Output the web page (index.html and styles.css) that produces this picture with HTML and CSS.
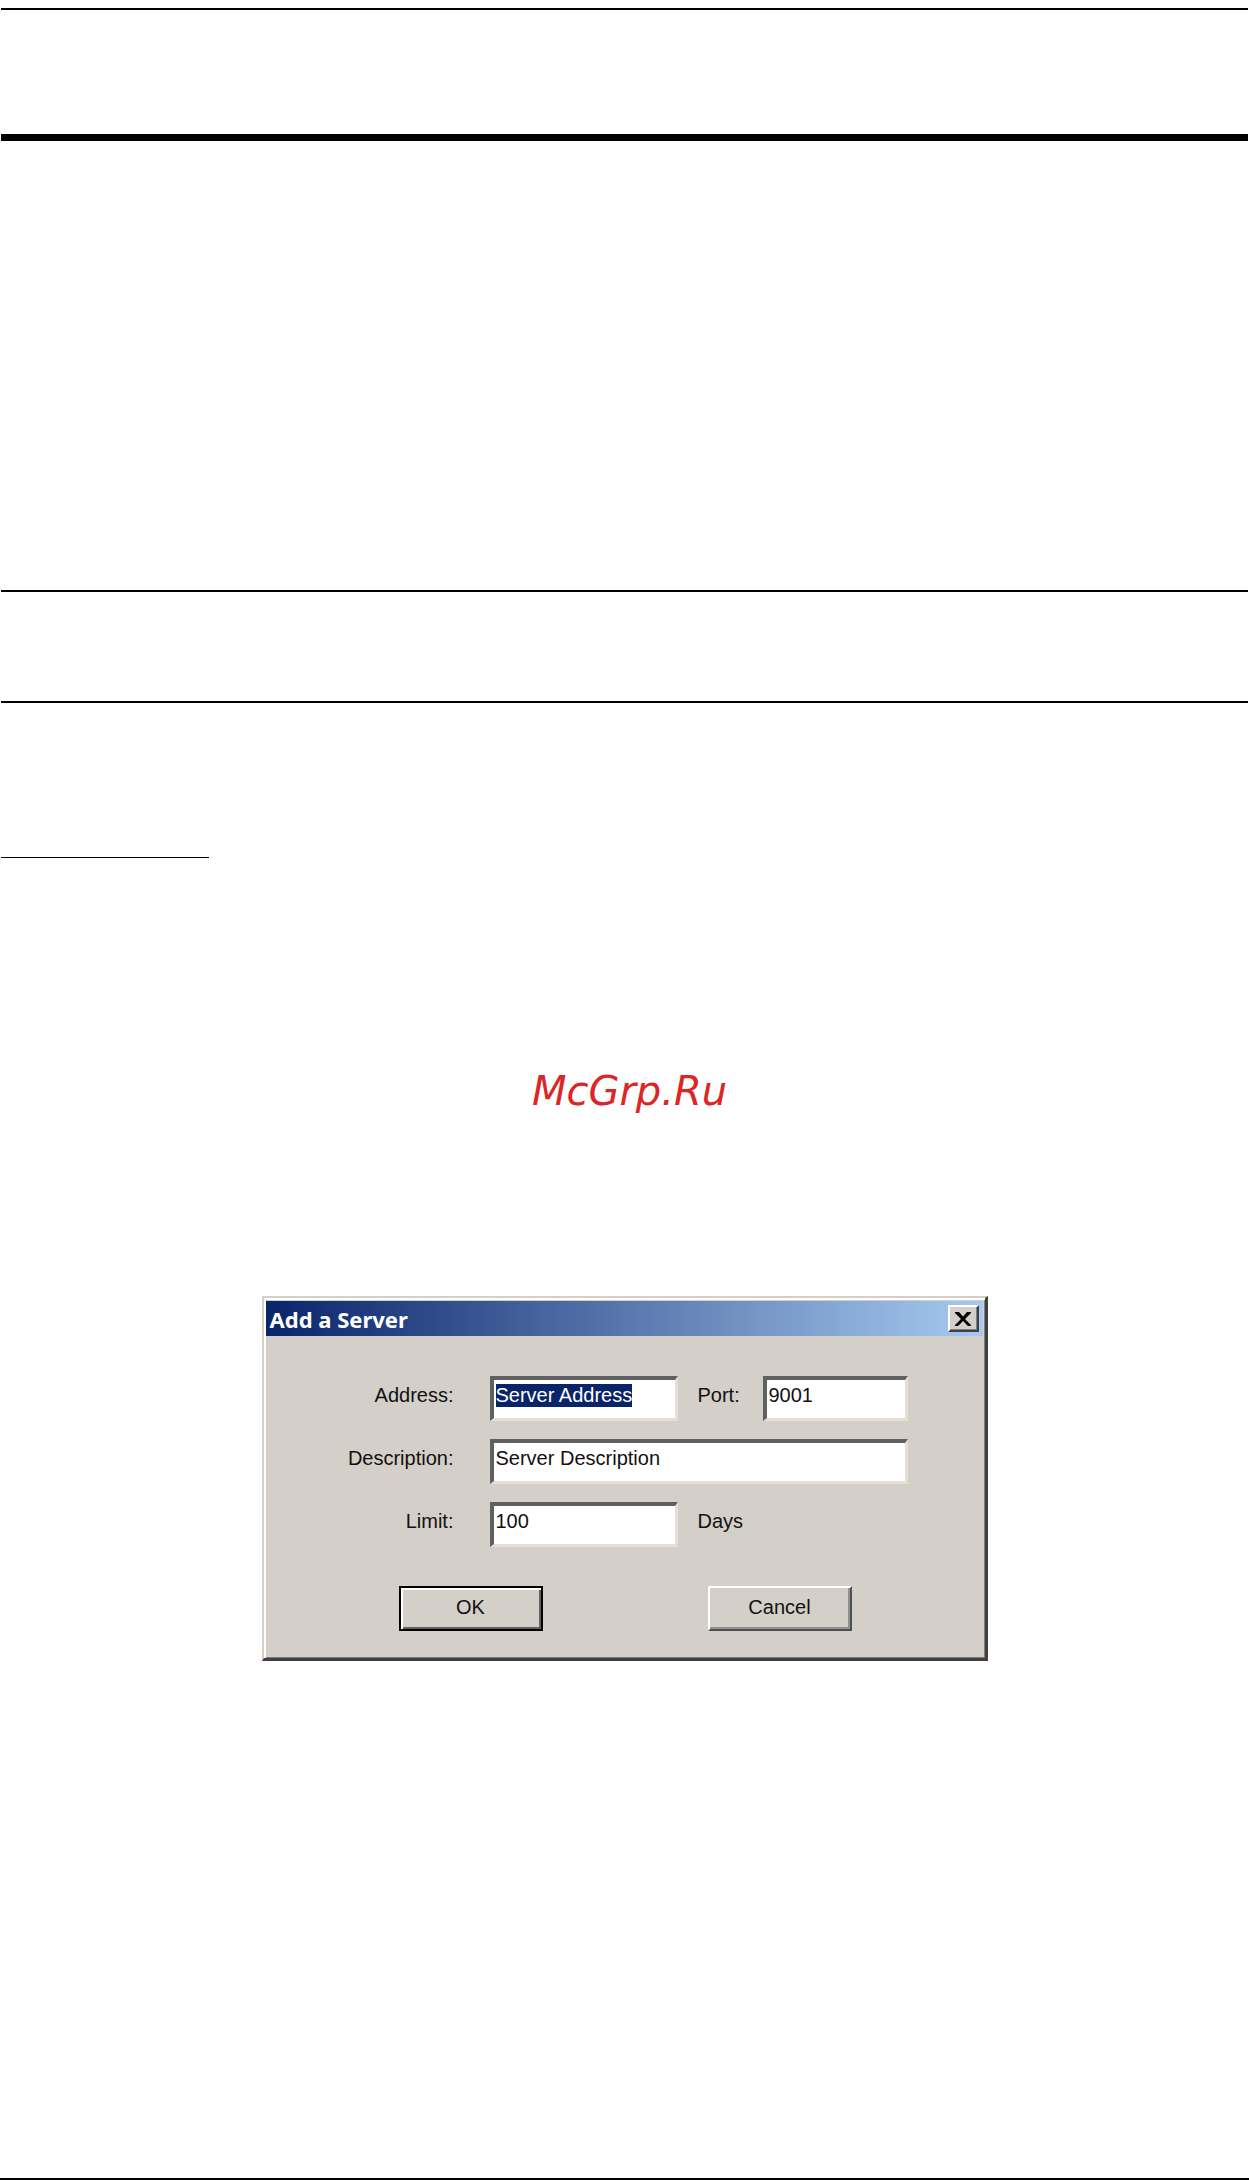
FILE: index.html
```html
<!DOCTYPE html>
<html lang="en">
<head>
<meta charset="utf-8">
<title>Add a Server</title>
<link rel="stylesheet" href="styles.css">
</head>
<body>
<main class="page">
  <hr class="rule rule-top">
  <hr class="rule rule-thick">
  <hr class="rule rule-section">
  <hr class="rule rule-subsection">
  <hr class="rule rule-note">
  <p class="brand">McGrp.Ru</p>
  <section class="dialog" role="dialog" aria-labelledby="dialog-title">
    <header class="titlebar">
      <h1 class="title" id="dialog-title">Add a Server</h1>
      <button class="close" type="button" aria-label="Close">
        <svg class="close-icon" viewBox="0 0 16 14" aria-hidden="true"><path d="M0 0h4l4 4.500 4-4.500h4v1l-6 6 6 6v1h-3l-5-5-5 5H0v-1l6-6-6-6z"/></svg>
      </button>
    </header>
    <form class="form">
      <div class="fields">
        <label class="label" for="address">Address:</label>
        <input class="input" id="address" type="text" value="Server Address">
        <label for="port">Port:</label>
        <input class="input" id="port" type="text" value="9001">
        <label class="label" for="description">Description:</label>
        <input class="input input-wide" id="description" type="text" value="Server Description">
        <label class="label" for="limit">Limit:</label>
        <input class="input" id="limit" type="text" value="100">
        <span class="unit">Days</span>
      </div>
      <div class="actions">
        <button class="button button-default" type="button">OK</button>
        <button class="button" type="button">Cancel</button>
      </div>
    </form>
  </section>
  <hr class="rule rule-bottom">
</main>
<script src="script.js"></script>
</body>
</html>
```
FILE: styles.css
```css
* {
  box-sizing: border-box;
}

body {
  margin: 0;
  background: #fff;
  color: #111;
  font-family: "Liberation Sans", sans-serif;
  font-size: 20px;
  line-height: 28px;
}

.page {
  display: flex;
  flex-direction: column;
  min-height: 100vh;
}

.rule {
  width: auto;
  height: 2px;
  margin: 0 1px;
  border: 0;
  background: #000;
  flex: none;
}

.rule-top {
  margin-top: 8px;
}

.rule-thick {
  height: 7px;
  margin-top: 124px;
}

.rule-section {
  margin-top: 449px;
}

.rule-subsection {
  margin-top: 109px;
}

.rule-note {
  width: 208px;
  height: 1px;
  margin-top: 154px;
}

.rule-bottom {
  margin: auto 0 0;
}

.brand {
  margin: 209px 0 0;
  padding-left: 10px;
  color: #dc2626;
  font-family: "DejaVu Sans", sans-serif;
  font-size: 40px;
  font-style: italic;
  line-height: 48px;
  text-align: center;
}

.dialog {
  width: 100%;
  max-width: 726px;
  margin: 181px auto 48px;
  padding: 3px 2px 1px 2px;
  border: 2px solid;
  border-color: #d4d0c8 #404040 #404040 #d4d0c8;
  border-right-width: 3px;
  border-bottom-width: 3px;
  background: #d4cfc8;
  box-shadow: inset 2px 2px #fff, inset -1px -1px #808080;
}

.titlebar {
  display: flex;
  align-items: center;
  justify-content: space-between;
  height: 35px;
  padding: 0 4px;
  background: linear-gradient(to right, #0a246a, #a6caf0);
}

.title {
  margin: 0;
  color: #fff;
  font-family: "Noto Sans", "Open Sans", sans-serif;
  font-size: 22px;
  font-weight: bold;
  line-height: 28px;
}

.close {
  display: flex;
  align-items: center;
  justify-content: center;
  width: 31px;
  height: 27px;
  padding: 0;
  border: 2px solid;
  border-color: #fff #404040 #404040 #fff;
  background: #d4cfc8;
  box-shadow: inset -1px -1px #808080;
}

.close-icon {
  width: 16px;
  height: 14px;
}

.form {
  padding: 40px 0 26px;
}

.fields {
  display: grid;
  grid-template-columns: 204px 188px 45px 145px;
  column-gap: 20px;
  row-gap: 18px;
}

.fields label,
.unit {
  padding-top: 5px;
}

.fields .label {
  padding-right: 16px;
  text-align: right;
}

.input {
  width: 100%;
  height: 45px;
  padding: 0 2px 7px;
  border: 3px solid;
  border-color: #606060 #e4e0d8 #e4e0d8 #606060;
  border-left-width: 4px;
  border-top-width: 4px;
  border-radius: 0;
  outline: 0;
  background: #fff;
  color: #111;
  font: inherit;
  caret-color: transparent;
}

.input::selection {
  background: #0a246a;
  color: #fff;
}

.input-wide {
  grid-column: 2 / 5;
}

.actions {
  display: flex;
  gap: 165px;
  margin-top: 39px;
  padding-left: 133px;
}

.button {
  width: 144px;
  height: 45px;
  padding: 0 0 4px;
  border: 2px solid;
  border-color: #fff #505050 #505050 #fff;
  border-radius: 0;
  background: #d4cfc8;
  box-shadow: inset -2px -2px #909090;
  color: #111;
  font: inherit;
}

.button-default {
  border-color: #000;
  box-shadow: inset 2px 2px #fff, inset -2px -2px #606060;
}
```
FILE: script.js
```js
const address = document.getElementById("address");
address.focus({ preventScroll: true });
address.select();
```
